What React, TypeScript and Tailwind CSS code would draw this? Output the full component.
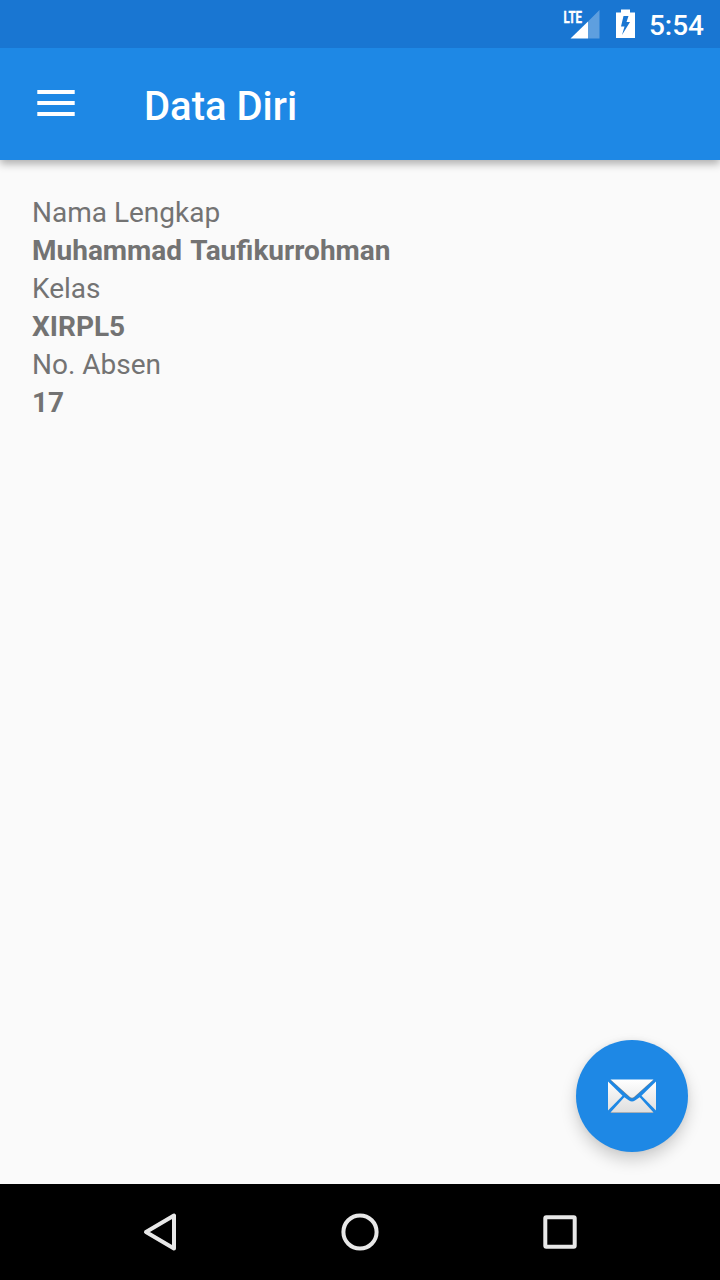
const rows = [
  { label: 'Nama Lengkap', value: 'Muhammad Taufikurrohman' },
  { label: 'Kelas', value: 'XIRPL5' },
  { label: 'No. Absen', value: '17' },
];

function StatusBar() {
  return (
    <div className="flex h-12 shrink-0 items-center justify-end bg-[#1976d2] pr-4 text-white">
      <svg className="mr-4 h-12 w-[37px]" viewBox="563 0 37 48" fill="#fff">
        <path d="M599.500 10V38.500H588V21.500Z" fillOpacity=".3" />
        <path d="M588 21.500V38.500H570.500Z" />
        <text x="563.500" y="22.500" textLength="18.500" lengthAdjust="spacingAndGlyphs" stroke="#fff" strokeWidth=".4" className="font-['Roboto',sans-serif] text-[17px] font-bold">LTE</text>
      </svg>
      <svg className="mr-[13px] h-12 w-5" viewBox="616 0 20 48">
        <path fillRule="evenodd" fill="#fff" d="M621 9.500h9v3h5V38h-19V12.500h5ZM623.500 16l-2.500 10.500h3.500l-2.500 8.500 8-13h-3.500l2-6Z" />
      </svg>
      <span className="pt-1 text-[28px] leading-8 font-medium">5:54</span>
    </div>
  );
}

export default function App() {
  return (
    <div className="relative flex h-[1280px] w-[720px] flex-col overflow-hidden bg-[#fafafa] font-['Roboto',sans-serif]">
      <StatusBar />
      <header className="flex h-28 shrink-0 items-center bg-[#1e88e5] pl-8 text-white shadow-[0_4px_8px_rgba(0,0,0,0.3)] [clip-path:inset(0_0_-16px_0)]">
        <svg className="h-12 w-12" viewBox="0 0 48 48" fill="none" stroke="#fff" strokeWidth="4">
          <path d="M5.300 12H42.700M5.300 23H42.700M5.300 34H42.700" />
        </svg>
        <h1 className="pt-1.5 pl-16 text-[40px] leading-[48px] font-medium">Data Diri</h1>
      </header>
      <main className="flex-1 px-8 pt-[34px] text-[28px] leading-[38px] text-[#737373]">
        {rows.map((r) => (
          <div key={r.label}>
            <p>{r.label}</p>
            <p className="font-bold [word-spacing:2px]">{r.value}</p>
          </div>
        ))}
      </main>
      <button aria-label="Email" className="absolute right-8 bottom-32 flex h-28 w-28 items-center justify-center rounded-full bg-[#1e88e5] shadow-[0_8px_16px_rgba(0,0,0,0.18),0_0_6px_rgba(0,0,0,0.06)]">
        <svg className="h-12 w-12" viewBox="0 0 48 48">
          <defs>
            <linearGradient id="paper" gradientUnits="userSpaceOnUse" x1="0" y1="8" x2="0" y2="41">
              <stop offset="0" stopColor="#fff" />
              <stop offset="1" stopColor="#dedede" />
            </linearGradient>
          </defs>
          <g fill="#6f7f8d" transform="translate(0 .6)">
            <path d="M2.500 7.500h43L26.300 25q-2.300 1.800-4.600 0Z" />
            <path d="M2.500 40.500L16.300 25.500l4.700 3.200q3 2 6 0l4.700-3.200 13.800 15Z" />
          </g>
          <g fill="url(#paper)">
            <path d="M2.500 7.500h43L26.300 24.800q-2.300 1.800-4.600 0Z" />
            <path d="M0 9.500L14.500 23.800 0 38.500Z" />
            <path d="M48 9.500L33.500 23.800 48 38.500Z" />
            <path d="M2.500 40.500L16.300 25.300l4.700 3.200q3 2 6 0l4.700-3.200 13.800 15.200Z" />
          </g>
        </svg>
      </button>
      <nav className="flex h-24 shrink-0 items-center justify-center gap-[152px] bg-black">
        <svg className="h-12 w-12" viewBox="136 1208 48 48" fill="none" stroke="#e8e8e8" strokeWidth="4" strokeLinejoin="round"><path d="M174 1215.500V1248.500L146 1232Z" /></svg>
        <svg className="h-12 w-12" viewBox="0 0 48 48" fill="none" stroke="#e8e8e8" strokeWidth="4"><circle cx="24" cy="24" r="16.600" /></svg>
        <svg className="h-12 w-12" viewBox="0 0 48 48" fill="none" stroke="#e8e8e8" strokeWidth="4"><rect x="9.300" y="9.300" width="29.400" height="29.400" rx="1" /></svg>
      </nav>
    </div>
  );
}
